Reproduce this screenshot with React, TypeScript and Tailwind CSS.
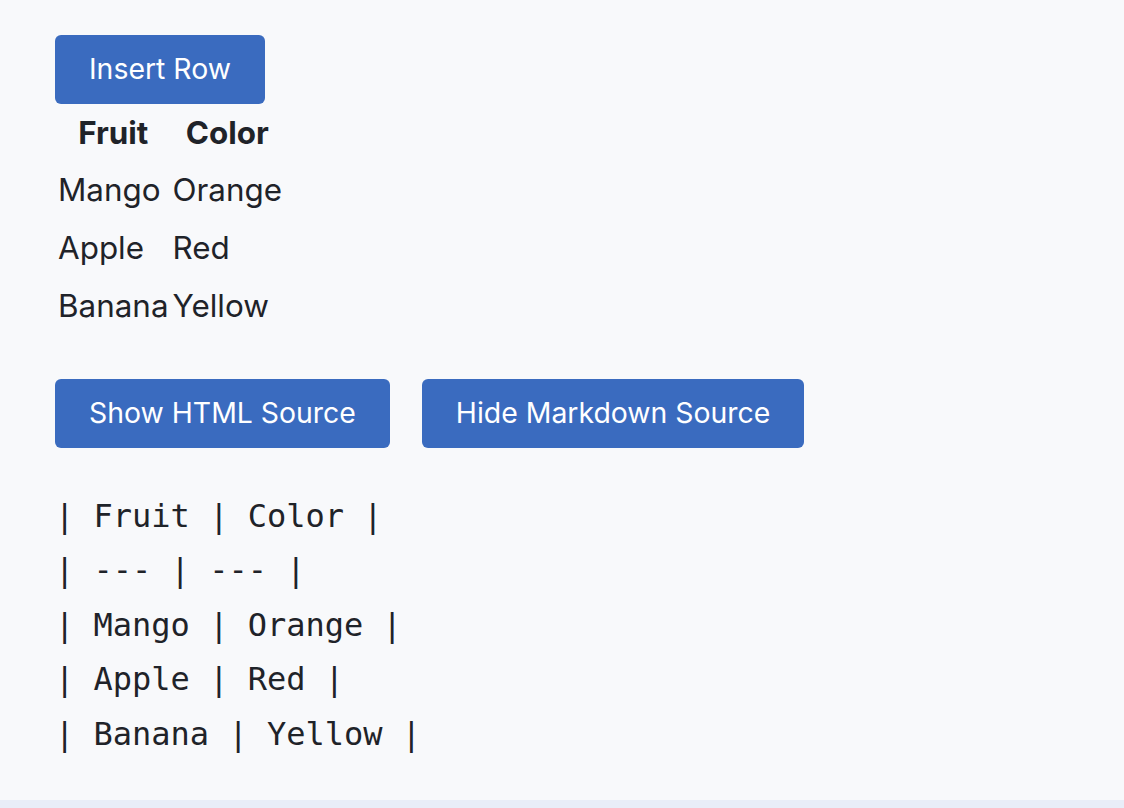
const rows = [
  ["Mango", "Orange"],
  ["Apple", "Red"],
  ["Banana", "Yellow"],
];

const markdown = `| Fruit | Color |
| --- | --- |
| Mango | Orange |
| Apple | Red |
| Banana | Yellow |`;

function Button({ children }: { children: React.ReactNode }) {
  return (
    <button className="h-[69px] rounded-[6px] bg-[#3a6bbf] px-[34px] text-[28.4px] text-white">
      {children}
    </button>
  );
}

export default function App() {
  return (
    <div className="font-['Inter',sans-serif] text-[#1f2329]">
      <div className="min-h-[800px] bg-[#f8f9fb] px-[55px] pt-[35px]">
        <Button>Insert Row</Button>
        <table className="text-[31.4px]">
          <thead>
            <tr className="h-[58px]">
              <th className="pl-[3px] pr-[2px] pt-[2px] text-center font-bold">Fruit</th>
              <th className="pl-[2px] pr-[3px] pt-[2px] text-center font-bold">Color</th>
            </tr>
          </thead>
          <tbody>
            {rows.map(([fruit, color]) => (
              <tr key={fruit} className="h-[58px]">
                <td className="pl-[3px] pr-[2px]">{fruit}</td>
                <td className="pl-[2px] pr-[3px]">{color}</td>
              </tr>
            ))}
          </tbody>
        </table>
        <div className="mt-[43px] flex gap-[32px]">
          <Button>Show HTML Source</Button>
          <Button>Hide Markdown Source</Button>
        </div>
        <pre className="mt-[41px] font-['DejaVu_Sans_Mono',monospace] text-[32px] leading-[54.4px]">
          {markdown}
        </pre>
      </div>
      <div className="h-[8px] bg-[#e9edf8]" />
    </div>
  );
}
